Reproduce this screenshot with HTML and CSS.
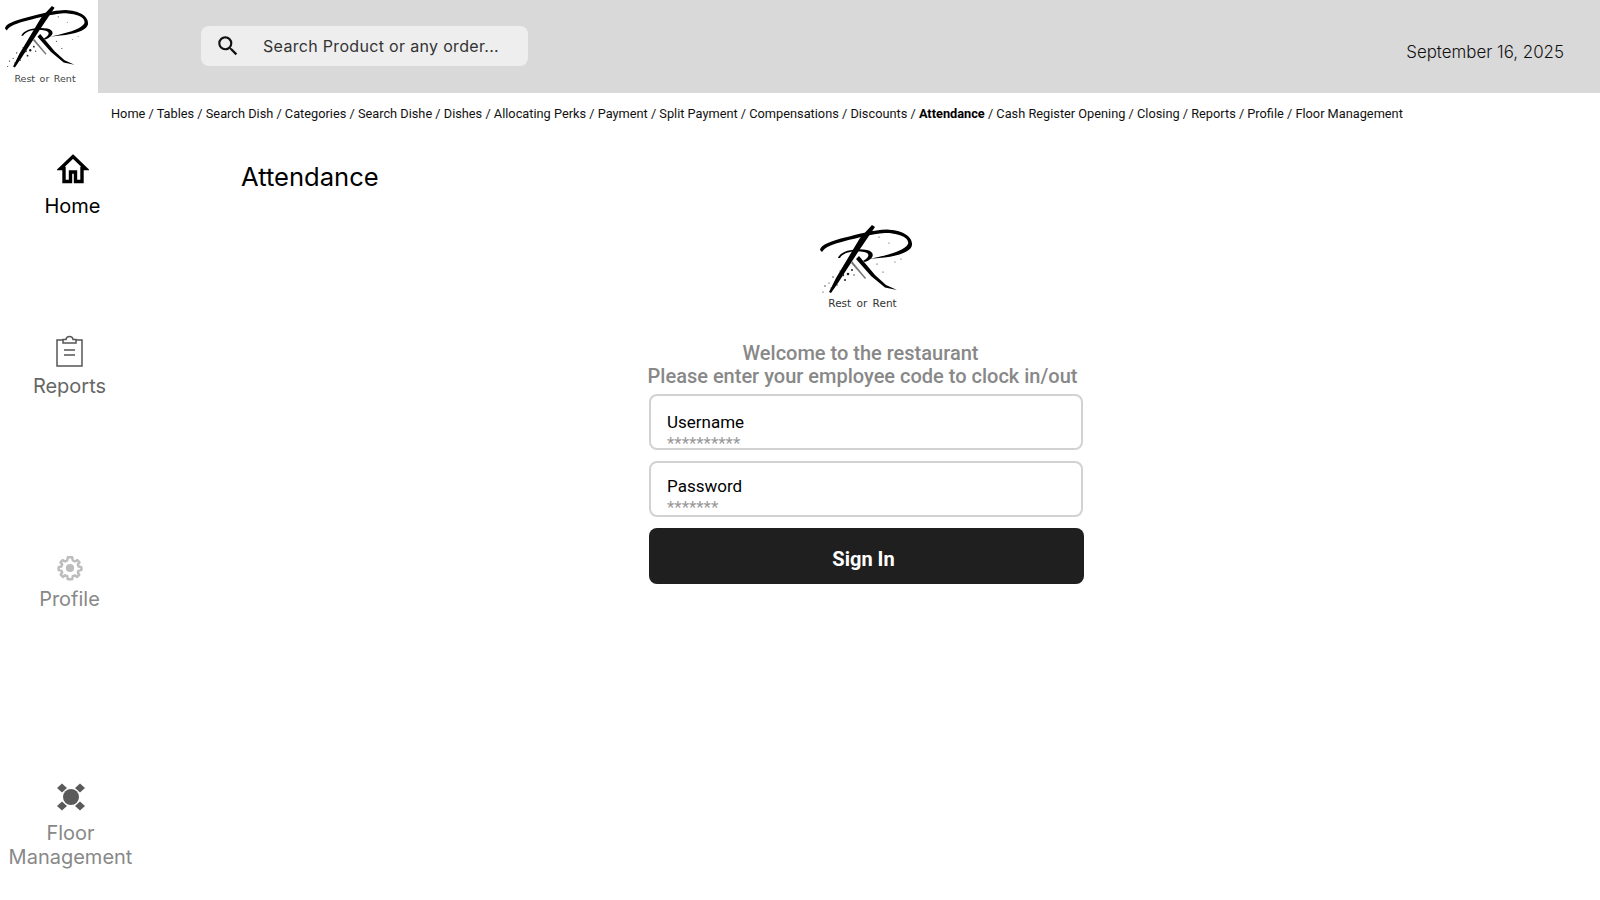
FILE: index.html
```html
<!DOCTYPE html>
<html lang="en">
  <head>
    <meta charset="UTF-8" />
    <title>Attendance</title>
    <link rel="stylesheet" href="styles.css">
  </head>
  <body>
    <!-- Shared logo mark -->
    <svg class="defs" width="0" height="0">
      <symbol id="logo-mark" viewBox="0 0 94 72">
        <path d="M1 25 C1 20 12 16 26 12.5 C40 9 54 5 68 4.5 C82 5 94 11 93 20 C92 28 74 32 60 33 L50 34 C60 32 85 27 89 19 C91 12 78 8 66 8 C52 9 38 13 26 16 C14 19 6 22 3 27 Z" fill="#000"/>
        <path d="M53 0 L56 2 L41 24 L28 44 L19 58 L12 68 L10 67 L17 53 L29 33 L41 13 Z" fill="#000"/>
        <path d="M19 33 C22 25 38 23 48 25 C56 27 56 33 46 37 L44 36 C51 32 51 28 45 27 C36 25 24 27 21 33 Z" fill="#000"/>
        <path d="M37 34 L40 31 L56 50 L67 60 L78 65 L66 62.5 L52 51 Z" fill="#000"/>
        <path d="M33 36 L47 53 L46 54 L32 38 Z" fill="#777"/>
        <g fill="#222">
          <circle cx="24" cy="50" r="1.2"/><circle cx="29" cy="49" r="1.3"/><circle cx="33" cy="45" r="1"/>
          <circle cx="26" cy="55" r="1"/><circle cx="14" cy="52" r=".7"/><circle cx="6" cy="61" r=".7"/>
          <circle cx="4" cy="67" r=".6"/><circle cx="10" cy="58" r=".6"/><circle cx="35" cy="50" r=".7"/>
          <circle cx="58" cy="39" r=".6"/><circle cx="64" cy="47" r=".6"/><circle cx="76" cy="37" r=".5"/>
          <circle cx="82" cy="34" r=".5"/><circle cx="70" cy="18" r=".5"/><circle cx="60" cy="12" r=".6"/>
          <circle cx="18" cy="60" r=".7"/><circle cx="12" cy="63" r=".6"/><circle cx="21" cy="46" r=".6"/>
        </g>
      </symbol>
    </svg>

    <!-- Top bar -->
    <header class="topbar">
      <div class="brand">
        <svg class="brand-mark"><use href="#logo-mark"/></svg>
        <span class="brand-name">Rest or Rent</span>
      </div>
      <div class="topbar-main">
        <div class="search">
          <svg class="search-icon" viewBox="0 0 24 24"><path d="M15.5 14h-.79l-.28-.27A6.47 6.47 0 0 0 16 9.5 6.5 6.5 0 1 0 9.5 16c1.61 0 3.09-.59 4.23-1.57l.27.28v.79l5 4.99L20.49 19l-4.99-5zm-6 0C7.01 14 5 11.99 5 9.5S7.01 5 9.5 5 14 7.01 14 9.5 11.99 14 9.5 14z" fill="#111"/></svg>
          <span>Search Product or any order...</span>
        </div>
        <div class="date">September 16, 2025</div>
      </div>
    </header>

    <div class="crumbs">Home / Tables / Search Dish / Categories / Search Dishe / Dishes / Allocating Perks / Payment / Split Payment / Compensations / Discounts / <strong>Attendance</strong> / Cash Register Opening / Closing / Reports / Profile / Floor Management</div>

    <div class="layout">
      <nav class="sidebar">
        <a class="nav-item nav-home">
          <svg class="nav-icon" viewBox="0 0 32 32">
            <path d="M16 3.5 L28.5 15.5 L25 15.5 L25 28.5 L18.5 28.5 L18.5 19 L13.5 19 L13.5 28.5 L7 28.5 L7 15.5 L3.5 15.5 Z" fill="none" stroke="#000" stroke-width="3.4" stroke-linejoin="miter"/>
          </svg>
          <span>Home</span>
        </a>
        <a class="nav-item nav-reports">
          <svg class="nav-icon" viewBox="0 0 32 32" fill="none" stroke="#555" stroke-width="1.5">
            <path d="M9 5 H3 V31 H28 V5 H22"/>
            <path d="M9 8 V4.5 H12 C12.5 .5 18.5 .5 19 4.5 H22 V8 Z"/>
            <path d="M10 15 H21 M10 20 H21" stroke-width="1.7"/>
          </svg>
          <span>Reports</span>
        </a>
        <a class="nav-item nav-profile">
          <svg class="nav-icon" viewBox="0 0 24 24" fill="none" stroke="#bdbdbd" stroke-width="2.3" stroke-linejoin="round">
            <path d="M10 2 H14 L14.6 5 L16.6 5.9 L18.8 4.7 L20.8 6.8 L19.2 8.7 L20 10.6 L22.5 11.2 V13.8 L20 14.4 L19.2 16.2 L20.6 18.2 L18.6 20.2 L16.5 18.8 L14.6 19.6 L14 22.3 H10 L9.4 19.6 L7.5 18.8 L5.4 20.2 L3.4 18.2 L4.8 16.2 L4 14.4 L1.5 13.8 V11.2 L4 10.6 L4.8 8.7 L3.2 6.8 L5.2 4.7 L7.4 5.9 L9.4 5 Z"/>
            <circle cx="12" cy="12" r="3.8" fill="#bdbdbd" stroke="none"/>
          </svg>
          <span>Profile</span>
        </a>
        <a class="nav-item nav-floor">
          <svg class="nav-icon" viewBox="0 0 32 32" fill="#5a5a5a">
            <circle cx="16" cy="16" r="8"/>
            <path d="M2 7 L7 2.5 L12 7 L7 11.5 Z M20 7 L25 2.5 L30 7 L25 11.5 Z M2 25 L7 20.5 L12 25 L7 29.5 Z M20 25 L25 20.5 L30 25 L25 29.5 Z"/>
          </svg>
          <span>Floor<br>Management</span>
        </a>
      </nav>

      <main class="content">
        <h1 class="page-title">Attendance</h1>
        <section class="attendance">
          <div class="attendance-logo">
            <svg class="attendance-mark"><use href="#logo-mark"/></svg>
            <span class="brand-name">Rest or Rent</span>
          </div>
          <p class="welcome"><span class="welcome-first">Welcome to the restaurant</span>Please enter your employee code to clock in/out</p>
          <form class="login-form">
            <div class="field">
              <span class="field-label">Username</span>
              <span class="field-mask">**********</span>
            </div>
            <div class="field field-tight">
              <span class="field-label">Password</span>
              <span class="field-mask">*******</span>
            </div>
            <button type="button" class="sign-in">Sign In</button>
          </form>
        </section>
      </main>
    </div>
  </body>
</html>
```
FILE: styles.css
```css
body {
  margin: 0;
  height: 900px;
  overflow: hidden;
  background: #fff;
  font-family: Inter, sans-serif;
  color: #000;
}
.defs {
  display: block;
  height: 0;
}

/* Top bar */
.topbar {
  display: flex;
  height: 93px;
}
.brand {
  width: 98px;
  flex-shrink: 0;
  display: flex;
  flex-direction: column;
  align-items: center;
  padding-top: 6px;
  box-sizing: border-box;
}
.brand-mark {
  width: 85px;
  height: 65px;
  align-self: flex-start;
  margin-left: 4px;
}
.brand-name {
  font-family: "DejaVu Sans", sans-serif;
  font-size: 10px;
  word-spacing: 2px;
  color: #333;
}
.brand .brand-name {
  font-size: 9.5px;
  word-spacing: 1.5px;
  color: #444;
  margin: 2px 8px 0 0;
}
.topbar-main {
  flex: 1;
  display: flex;
  justify-content: space-between;
  background: #d9d9d9;
  padding: 26px 36px 0 103px;
}
.search {
  display: flex;
  align-items: center;
  width: 327px;
  height: 40px;
  background: #eeeeee;
  border-radius: 8px;
  font-size: 16px;
  letter-spacing: 0.32px;
  color: #333;
}
.search-icon {
  width: 26px;
  height: 26px;
  margin: 0 22px 0 14px;
  flex-shrink: 0;
}
.date {
  font-size: 16.9px;
  font-weight: 300;
  color: #111;
  padding-top: 16px;
}

/* Breadcrumb */
.crumbs {
  font-family: Roboto, sans-serif;
  font-size: 12.78px;
  line-height: 16px;
  padding: 13px 0 0 111px;
  color: #111;
}
.crumbs strong {
  color: #000;
}

/* Sidebar */
.layout {
  display: flex;
}
.sidebar {
  width: 141px;
  flex-shrink: 0;
  display: flex;
  flex-direction: column;
  font-size: 20px;
  line-height: 24px;
}
.nav-item {
  display: flex;
  flex-direction: column;
  align-items: center;
  text-align: center;
}
.nav-icon {
  width: 32px;
  height: 32px;
  margin-bottom: 7px;
}
.nav-home {
  color: #000;
  margin: 31px 0 0 4px;
}
.nav-home .nav-icon {
  margin-bottom: 9px;
}
.nav-reports {
  color: #666;
  margin-top: 117px;
  margin-right: 2px;
}
.nav-profile {
  color: #888;
  margin-top: 157px;
  margin-right: 2px;
}
.nav-profile .nav-icon {
  width: 26px;
  height: 26px;
  margin-bottom: 6px;
}
.nav-floor {
  color: #888;
  margin-top: 170px;
}
.nav-floor .nav-icon {
  margin-bottom: 8px;
}

/* Main column */
.content {
  flex: 1;
  min-width: 0;
}
.page-title {
  margin: 39px 0 0 100px;
  font-size: 25.6px;
  line-height: 32px;
  font-weight: 400;
}
.attendance {
  width: 435px;
  margin: 0 0 0 508px;
  display: flex;
  flex-direction: column;
  align-items: center;
}
.attendance-logo {
  display: flex;
  flex-direction: column;
  align-items: center;
  margin: 32px 8px 0 0;
}
.attendance-mark {
  width: 94px;
  height: 72px;
  margin-left: 6px;
}
.attendance-logo .brand-name {
  font-size: 10.5px;
}
.welcome {
  margin: 33px 0 6px;
  width: 460px;
  font-family: Roboto, sans-serif;
  font-size: 20px;
  font-weight: 500;
  line-height: 23px;
  text-align: center;
  color: #888;
  transform: translateX(-4px);
}
.welcome-first {
  display: block;
  padding-right: 4px;
}
.login-form {
  width: 100%;
  display: flex;
  flex-direction: column;
  gap: 11px;
}
.field {
  height: 56px;
  box-sizing: border-box;
  border: 2px solid #d2d2d2;
  border-radius: 8px;
  margin-right: 1px;
  padding: 16px 16px 0;
  font-family: Roboto, sans-serif;
  display: flex;
  flex-direction: column;
}
.field-tight {
  padding-top: 13px;
}
.field-label {
  font-size: 17px;
  line-height: 20px;
}
.field-mask {
  font-size: 17px;
  line-height: 14px;
  color: #999;
  margin-top: 4px;
}
.sign-in {
  height: 56px;
  border: 0;
  border-radius: 8px;
  background: #1f1f1f;
  color: #fff;
  font-family: Roboto, sans-serif;
  font-size: 20px;
  font-weight: 700;
  padding: 6px 6px 0 0;
}
```
